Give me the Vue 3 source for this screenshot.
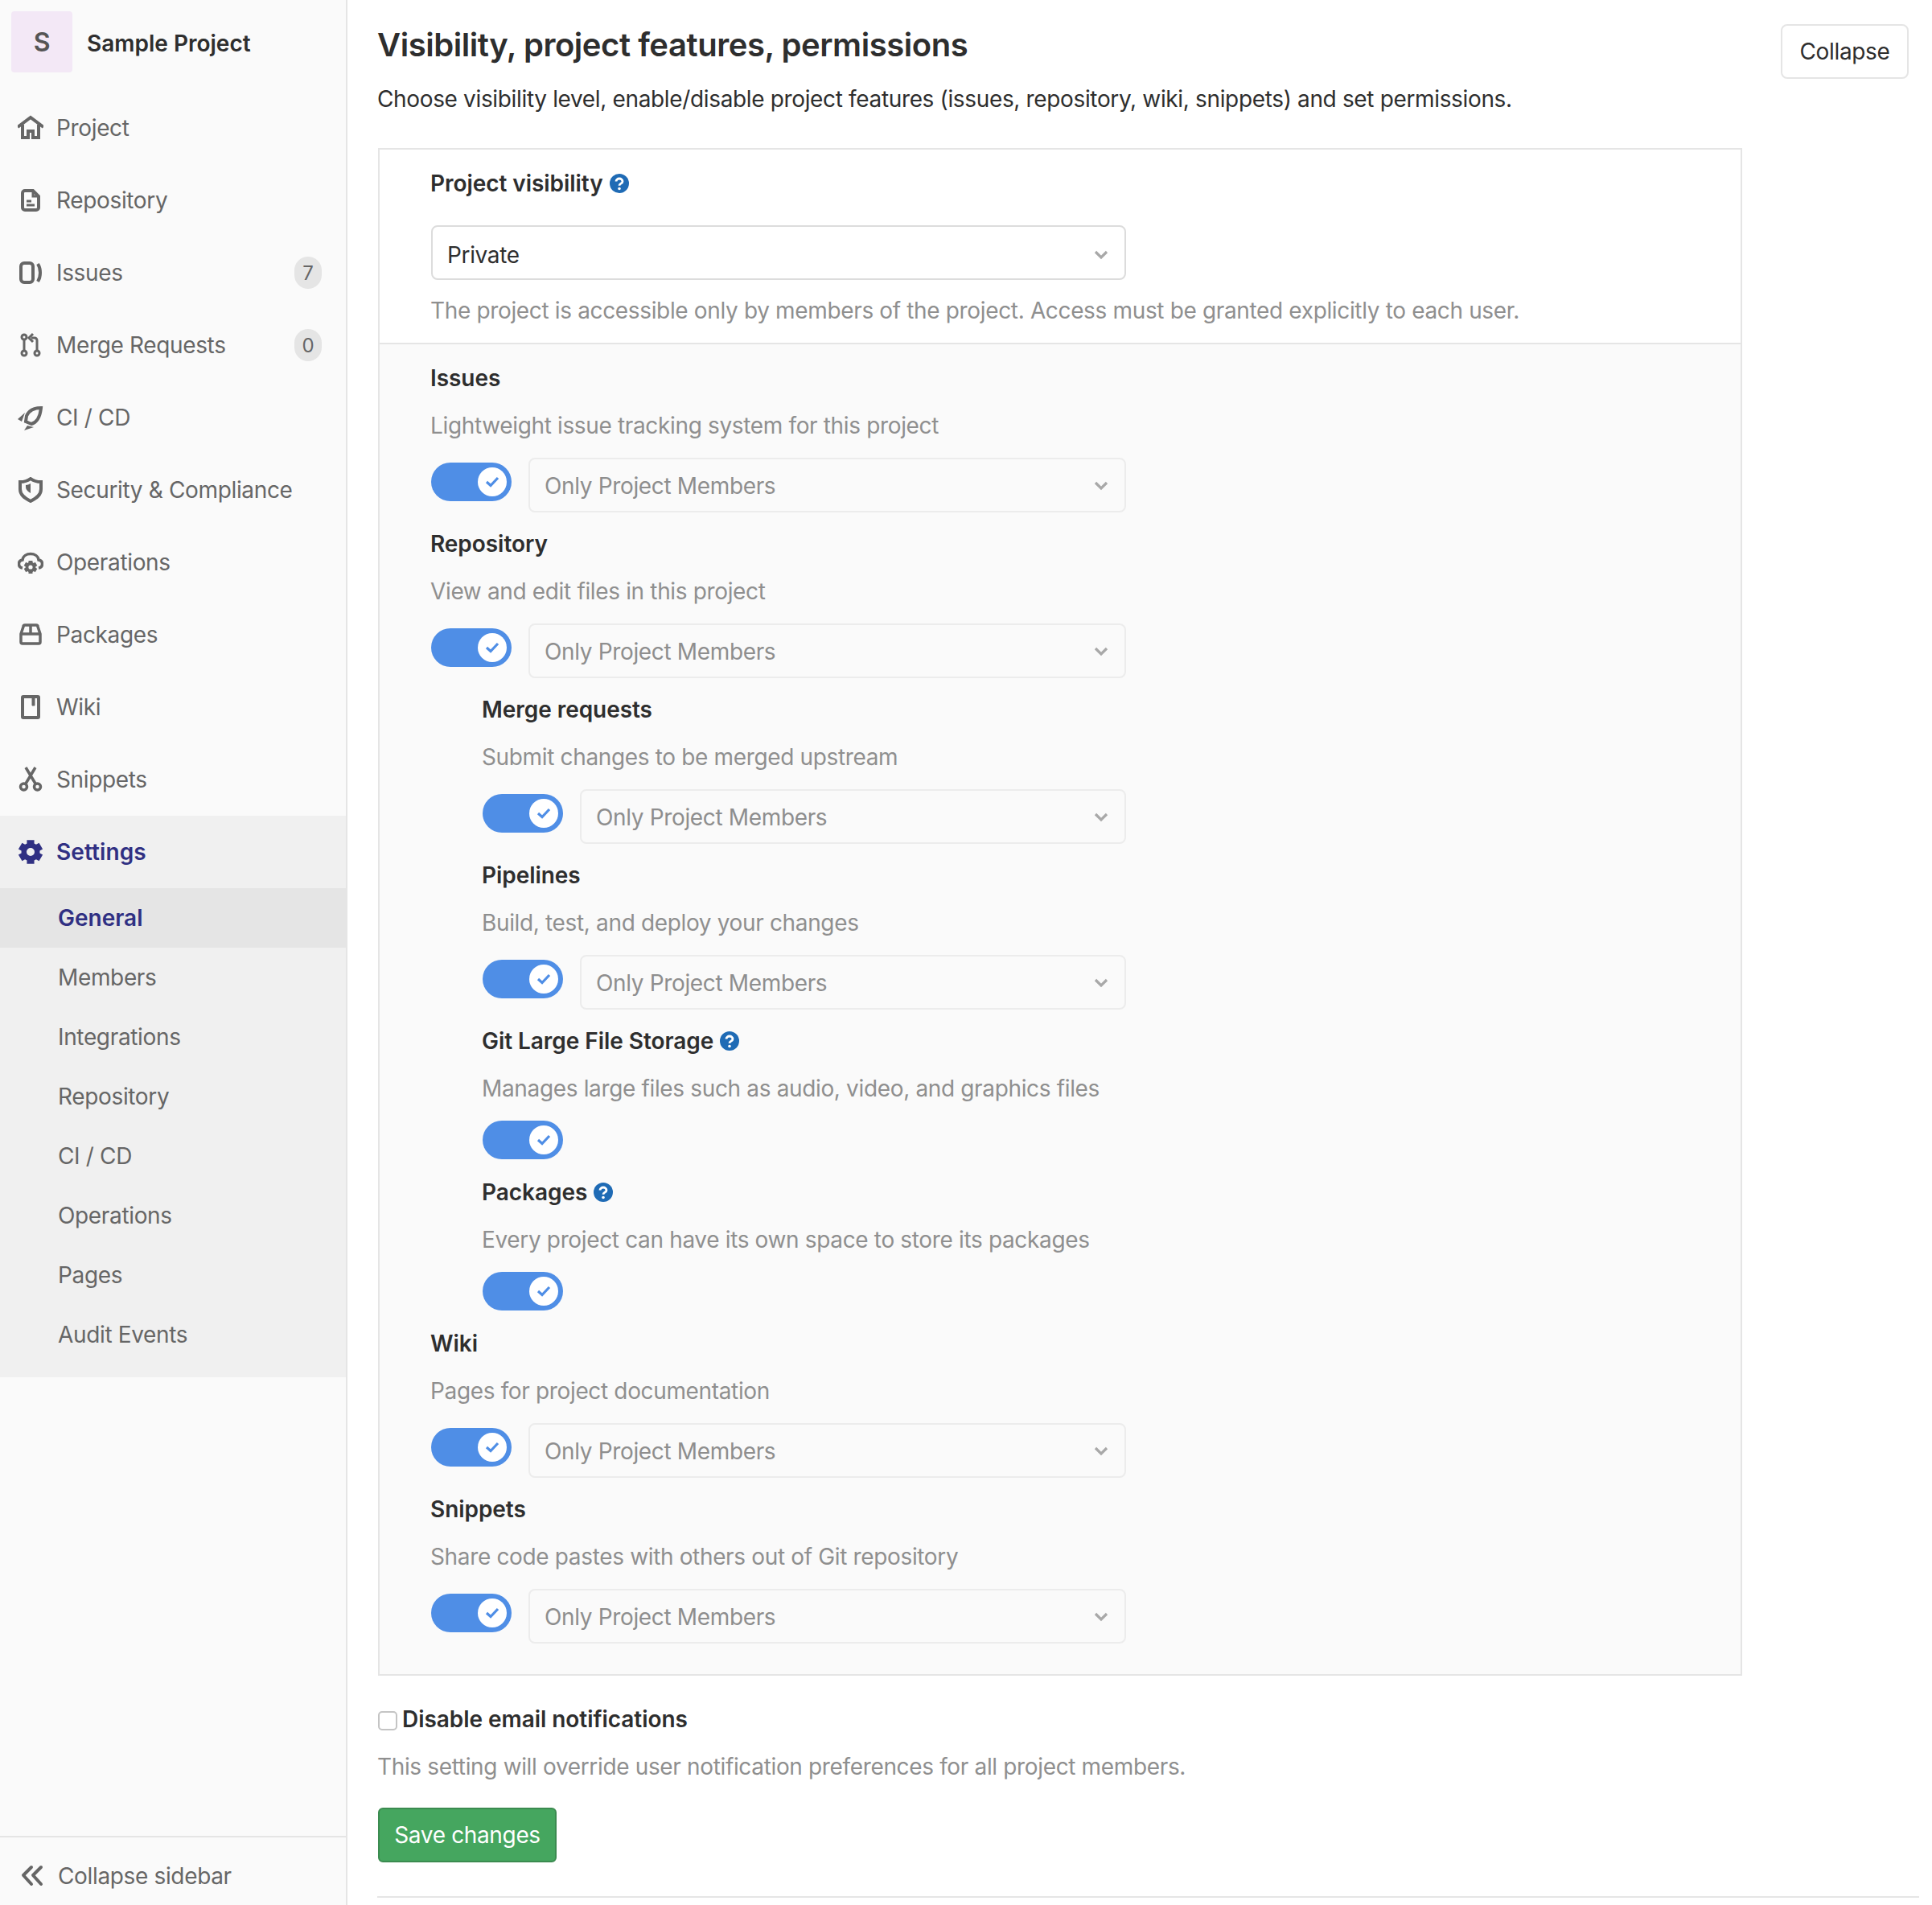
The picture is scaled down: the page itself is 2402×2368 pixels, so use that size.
<script setup>
function gearPath(cx, cy, outer, inner, hole) {
  const pts = []
  for (let i = 0; i < 6; i++) {
    const a = (Math.PI / 3) * i - Math.PI / 2
    const step = 0.3
    pts.push([a - step, outer], [a + step, outer], [a + Math.PI / 6 - 0.12, inner], [a + Math.PI / 6 + 0.12, inner])
  }
  const d = pts
    .map(([a, r], i) => `${i ? 'L' : 'M'}${(cx + r * Math.cos(a)).toFixed(2)} ${(cy + r * Math.sin(a)).toFixed(2)}`)
    .join('')
  return `${d}Z M${cx - hole} ${cy}a${hole} ${hole} 0 1 0 ${hole * 2} 0a${hole} ${hole} 0 1 0 ${-hole * 2} 0Z`
}
const settingsGear = gearPath(16, 16, 15.5, 11.5, 5)
const cloudGear = gearPath(16, 22, 8.5, 6.4, 2.6)

const navItems = [
  { label: 'Project', icon: 'home' },
  { label: 'Repository', icon: 'doc' },
  { label: 'Issues', icon: 'issues', badge: '7' },
  { label: 'Merge Requests', icon: 'merge', badge: '0' },
  { label: 'CI / CD', icon: 'rocket' },
  { label: 'Security & Compliance', icon: 'shield' },
  { label: 'Operations', icon: 'cloud' },
  { label: 'Packages', icon: 'package' },
  { label: 'Wiki', icon: 'book' },
  { label: 'Snippets', icon: 'scissors' }
]
const subItems = ['General', 'Members', 'Integrations', 'Repository', 'CI / CD', 'Operations', 'Pages', 'Audit Events']
const features = [
  { title: 'Issues', desc: 'Lightweight issue tracking system for this project', select: true },
  { title: 'Repository', desc: 'View and edit files in this project', select: true },
  { title: 'Merge requests', desc: 'Submit changes to be merged upstream', select: true, sub: true },
  { title: 'Pipelines', desc: 'Build, test, and deploy your changes', select: true, sub: true },
  { title: 'Git Large File Storage', desc: 'Manages large files such as audio, video, and graphics files', sub: true, help: true },
  { title: 'Packages', desc: 'Every project can have its own space to store its packages', sub: true, help: true },
  { title: 'Wiki', desc: 'Pages for project documentation', select: true },
  { title: 'Snippets', desc: 'Share code pastes with others out of Git repository', select: true }
]
</script>

<template>
  <div class="page">
    <aside class="sidebar">
      <div class="context">
        <div class="avatar">S</div>
        <span class="context-name">Sample Project</span>
      </div>
      <ul class="nav">
        <li v-for="item in navItems" :key="item.label" class="nav-item">
          <svg class="nav-icon" viewBox="0 0 32 32" fill="none" stroke="currentColor" stroke-width="4">
            <g v-if="item.icon === 'home'">
              <path d="M0 15 16 3l16 12" />
              <path d="M6 12v16h7v-8h6v8h7V12" />
            </g>
            <g v-else-if="item.icon === 'doc'">
              <path d="M19 4H9a3 3 0 0 0-3 3v18a3 3 0 0 0 3 3h14a3 3 0 0 0 3-3V11z" />
              <path d="M19 4v7h7" stroke-width="3" />
              <path d="M11 17h6M11 22h10" stroke-width="3" />
            </g>
            <g v-else-if="item.icon === 'issues'">
              <rect x="4" y="4" width="15" height="24" rx="4" />
              <path d="M25 5c4 6 4 16 0 22" stroke-width="4" />
            </g>
            <g v-else-if="item.icon === 'merge'">
              <circle cx="8" cy="6" r="3" stroke-width="3" />
              <circle cx="8" cy="26" r="3" stroke-width="3" />
              <circle cx="24" cy="26" r="3" stroke-width="3" />
              <path d="M8 9v14" stroke-width="3" />
              <path d="M24 23V10a3 3 0 0 0-3-3h-4" stroke-width="3" />
              <path d="M19 2l-5 5 5 5" stroke-width="3" />
            </g>
            <g v-else-if="item.icon === 'rocket'">
              <path d="M29 4c-9 0-15 3-18 10l-1 7 7 3c7-2 11-10 12-20z" stroke-width="4" />
              <path d="M9 10 0 18l5 3zM12 26l8 2-12 4z" fill="currentColor" stroke="none" />
            </g>
            <g v-else-if="item.icon === 'shield'">
              <path d="M3 6c5 0 9-1 13-4 4 3 8 4 13 4v9c0 7-5 11-13 15C8 26 3 22 3 15z" stroke-width="4" />
              <path d="M16 8v12c-3-2-6-4-6-8v-2c2 0 4-1 6-2z" fill="currentColor" stroke="none" />
            </g>
            <g v-else-if="item.icon === 'cloud'">
              <path d="M6 23c-6-1-6-9 0-10C7 3 25 3 26 13c6 1 6 9 0 10" stroke-width="3.500" />
              <path :d="cloudGear" fill="currentColor" stroke="none" fill-rule="evenodd" />
            </g>
            <g v-else-if="item.icon === 'package'">
              <path d="M4 15v10a2 2 0 0 0 2 2h20a2 2 0 0 0 2-2V15l-3-9a2 2 0 0 0-2-2H9a2 2 0 0 0-2 2zM4 15h24M16 4v10" stroke-width="3.500" />
            </g>
            <g v-else-if="item.icon === 'book'">
              <path d="M7 3h18a1 1 0 0 1 1 1v24a1 1 0 0 1-1 1H7a1 1 0 0 1-1-1V4a1 1 0 0 1 1-1z" />
              <path d="M18 3v11h3V3" fill="currentColor" stroke-width="1" />
            </g>
            <g v-else-if="item.icon === 'scissors'">
              <circle cx="7.500" cy="25" r="4" stroke-width="3.500" />
              <circle cx="24.500" cy="25" r="4" stroke-width="3.500" />
              <path d="M22 1 10 21M10 1l12 20" stroke-width="3.500" />
            </g>
          </svg>
          <span class="nav-label">{{ item.label }}</span>
          <span v-if="item.badge" class="badge">{{ item.badge }}</span>
        </li>
      </ul>
      <div class="settings">
        <div class="nav-item active">
          <svg class="nav-icon" viewBox="0 0 32 32">
            <path fill="currentColor" fill-rule="evenodd" :d="settingsGear" />
          </svg>
          <span class="nav-label">Settings</span>
        </div>
        <div
          v-for="(sub, i) in subItems"
          :key="sub"
          class="sub-item"
          :class="{ 'sub-active': i === 0 }"
        >{{ sub }}</div>
      </div>
      <div class="collapse-sidebar">
        <svg class="collapse-icon" viewBox="0 0 28 28" fill="none" stroke="currentColor" stroke-width="4" stroke-linecap="round" stroke-linejoin="round">
          <path d="M13 3 3 13l10 11M25 3 15 13l10 11" />
        </svg>
        <span>Collapse sidebar</span>
      </div>
    </aside>

    <main class="main">
      <header class="head">
        <div>
          <h2 class="title">Visibility, project features, permissions</h2>
          <p class="subtitle">Choose visibility level, enable/disable project features (issues, repository, wiki, snippets) and set permissions.</p>
        </div>
        <button class="collapse-btn">Collapse</button>
      </header>

      <section class="panel">
        <div class="visibility">
          <div class="label">
            Project visibility
            <svg class="help" viewBox="0 0 24 24">
              <circle cx="12" cy="12" r="12" fill="#1f6bb5" />
              <path d="M8 9.500C8 7.500 9.800 6 12 6s4 1.500 4 3.400c0 2.800-4 2.600-4 5.300" fill="none" stroke="#fff" stroke-width="2.800" />
              <circle cx="12" cy="18.500" r="1.800" fill="#fff" />
            </svg>
          </div>
          <div class="select select-main">
            <span>Private</span>
            <svg class="chevron" viewBox="0 0 18 12" fill="none" stroke="currentColor" stroke-width="3.200"><path d="m2 2 7 7 7-7" /></svg>
          </div>
          <p class="desc">The project is accessible only by members of the project. Access must be granted explicitly to each user.</p>
        </div>
        <div class="features">
          <div v-for="f in features" :key="f.title" class="feature" :class="{ sub: f.sub, 'no-select': !f.select }">
            <div class="label">
              {{ f.title }}
              <svg v-if="f.help" class="help" viewBox="0 0 24 24">
                <circle cx="12" cy="12" r="12" fill="#1f6bb5" />
                <path d="M8 9.500C8 7.500 9.800 6 12 6s4 1.500 4 3.400c0 2.800-4 2.600-4 5.300" fill="none" stroke="#fff" stroke-width="2.800" />
                <circle cx="12" cy="18.500" r="1.800" fill="#fff" />
              </svg>
            </div>
            <p class="desc">{{ f.desc }}</p>
            <div class="controls">
              <div class="toggle">
                <span class="knob">
                  <svg viewBox="0 0 20 20" fill="none" stroke="#4f8ee6" stroke-width="3.200"><path d="m3 10 5 4.500L17 5" /></svg>
                </span>
              </div>
              <div v-if="f.select" class="select">
                <span>Only Project Members</span>
                <svg class="chevron" viewBox="0 0 18 12" fill="none" stroke="currentColor" stroke-width="3.200"><path d="m2 2 7 7 7-7" /></svg>
              </div>
            </div>
          </div>
        </div>
      </section>

      <label class="check-row">
        <span class="checkbox"></span>
        <span class="check-label">Disable email notifications</span>
      </label>
      <p class="desc check-desc">This setting will override user notification preferences for all project members.</p>
      <button class="save">Save changes</button>
      <hr class="rule" />
    </main>
  </div>
</template>

<style>
html, body { margin: 0; background: #fff; }
</style>

<style scoped>
.page {
  display: flex;
  width: 2402px;
  height: 2368px;
  overflow: hidden;
  font-family: Inter, "Liberation Sans", sans-serif;
  font-size: 28px;
  letter-spacing: -0.35px;
  color: #2e2e2e;
}
.sidebar {
  box-sizing: border-box;
  width: 432px;
  flex: none;
  display: flex;
  flex-direction: column;
  background: #fafafa;
  border-right: 2px solid #e5e5e5;
}
.context {
  display: flex;
  align-items: flex-start;
  box-sizing: border-box;
  height: 114px;
  padding: 14px 0 0 14px;
  flex: none;
}
.avatar {
  width: 76px;
  height: 76px;
  border-radius: 4px;
  background: #f3e8f6;
  color: #555;
  font-size: 32px;
  font-weight: 600;
  display: flex;
  align-items: center;
  justify-content: center;
}
.context-name {
  margin-left: 18px;
  font-weight: 600;
  letter-spacing: 0;
  line-height: 80px;
}
.nav {
  list-style: none;
  margin: 0;
  padding: 0;
}
.nav-item {
  display: flex;
  align-items: center;
  height: 90px;
  padding: 0 30px 0 22px;
  color: #666;
  box-sizing: border-box;
}
.nav-icon {
  width: 32px;
  height: 32px;
  flex: none;
  margin-right: 16px;
}
.nav-label {
  flex: 1;
}
.badge {
  box-sizing: border-box;
  min-width: 34px;
  height: 40px;
  padding: 0 9px;
  border-radius: 20px;
  background: #e5e5e5;
  color: #666;
  font-size: 24px;
  letter-spacing: 0;
  display: flex;
  align-items: center;
  justify-content: center;
}
.settings {
  background: #f0f0f0;
  padding-bottom: 16px;
}
.active {
  color: #303083;
  font-weight: 600;
  letter-spacing: 0.1px;
}
.sub-item {
  display: flex;
  align-items: center;
  height: 74px;
  padding-left: 72px;
  color: #666;
}
.sub-active {
  background: #e5e5e5;
  color: #303083;
  font-weight: 600;
  letter-spacing: 0;
}
.collapse-sidebar {
  margin-top: auto;
  height: 86px;
  box-sizing: border-box;
  border-top: 2px solid #e5e5e5;
  display: flex;
  align-items: center;
  padding: 11px 0 0 26px;
  color: #666;
}
.collapse-icon {
  width: 28px;
  height: 28px;
  margin-right: 18px;
}
.main {
  flex: 1;
  min-width: 0;
  padding-left: 37px;
  padding-right: 16px;
  display: flex;
  flex-direction: column;
  align-items: flex-start;
}
.head {
  align-self: stretch;
  display: flex;
  justify-content: space-between;
  padding-right: 13px;
  height: 184px;
  flex: none;
}
.title {
  margin: 31px 0 0;
  font-size: 40px;
  line-height: 50px;
  font-weight: 600;
  letter-spacing: -0.45px;
}
.subtitle {
  margin: 22px 0 0;
  line-height: 40px;
}
.collapse-btn {
  box-sizing: border-box;
  margin-top: 30px;
  width: 159px;
  height: 68px;
  background: #fff;
  border: 2px solid #e5e5e5;
  border-radius: 8px;
  font: inherit;
  letter-spacing: inherit;
  color: #2e2e2e;
}
.panel {
  box-sizing: border-box;
  width: 1696px;
  margin-left: 1px;
  flex: none;
  border: 2px solid #e5e5e5;
}
.visibility {
  padding: 22px 64px 20px 63px;
  border-bottom: 2px solid #e5e5e5;
  background: #fff;
}
.label {
  display: flex;
  align-items: center;
  height: 40px;
  line-height: 40px;
  font-weight: 600;
  letter-spacing: -0.05px;
  gap: 8px;
}
.help {
  width: 24px;
  height: 24px;
  flex: none;
}
.desc {
  margin: 18px 0 0;
  line-height: 40px;
  color: #8f8f8f;
}
.feature .desc {
  margin-top: 19px;
}
.select {
  box-sizing: border-box;
  flex: 1;
  height: 68px;
  background: #fafafa;
  border: 2px solid #ececec;
  border-radius: 8px;
  display: flex;
  align-items: center;
  justify-content: space-between;
  padding: 2px 20px 0 18px;
  color: #8e8e8e;
}
.select-main {
  width: 864px;
  margin: 32px 0 0 1px;
  padding-top: 5px;
  background: #fff;
  border-color: #dcdcdc;
  color: #2e2e2e;
}
.chevron {
  width: 18px;
  height: 12px;
  color: #a8a8a8;
  flex: none;
}
.features {
  background: #fafafa;
  padding: 22px 64px 19px 63px;
}
.feature {
  width: 865px;
  box-sizing: border-box;
  padding-bottom: 19px;
}
.feature.no-select {
  padding-bottom: 21px;
}
.feature.sub {
  padding-left: 64px;
}
.controls {
  display: flex;
  align-items: flex-start;
  gap: 21px;
  margin: 20px 0 0 1px;
}
.no-select .controls {
  margin-top: 20px;
}
.toggle {
  box-sizing: border-box;
  width: 100px;
  height: 48px;
  margin-top: 6px;
  flex: none;
  border-radius: 24px;
  background: #4f8ee6;
  position: relative;
}
.no-select .toggle {
  margin-top: 0;
}
.knob {
  position: absolute;
  top: 6px;
  right: 6px;
  width: 36px;
  height: 36px;
  border-radius: 50%;
  background: #fff;
  display: flex;
  align-items: center;
  justify-content: center;
}
.knob svg {
  width: 20px;
  height: 20px;
}
.check-row {
  display: flex;
  align-items: center;
  margin: 34px 0 0 1px;
  height: 40px;
  font-weight: 600;
  letter-spacing: -0.05px;
}
.checkbox {
  box-sizing: border-box;
  width: 24px;
  height: 24px;
  margin-right: 6px;
  margin-top: 4px;
  background: #fff;
  border: 2px solid #c4c4c4;
  border-radius: 5px;
}
.check-desc {
  margin-top: 19px;
}
.save {
  box-sizing: border-box;
  margin: 31px 0 0 1px;
  width: 222px;
  height: 68px;
  flex: none;
  background: #45a65f;
  border: 2px solid #3b8b50;
  border-radius: 6px;
  color: #fff;
  font: inherit;
  letter-spacing: inherit;
}
.rule {
  align-self: stretch;
  box-sizing: border-box;
  margin: 42px 0 0;
  height: 2px;
  flex: none;
  border: 0;
  background: #e5e5e5;
}
</style>
